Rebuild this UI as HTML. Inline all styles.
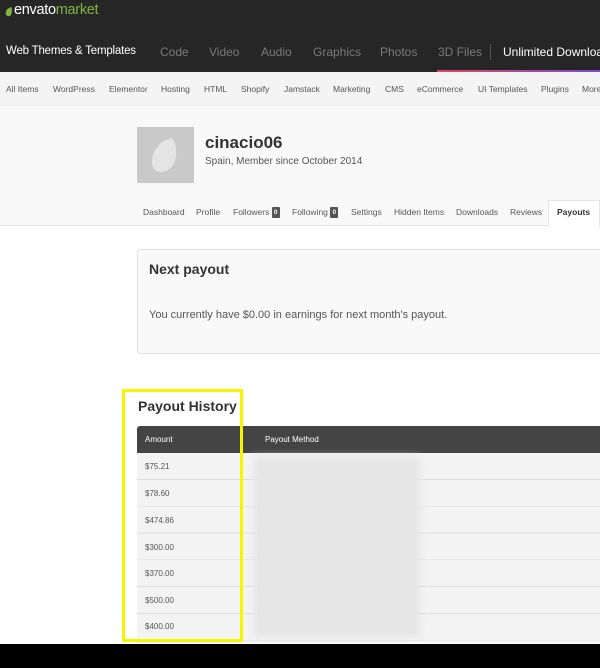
<!DOCTYPE html>
<html><head><meta charset="utf-8"><style>
*{margin:0;padding:0;box-sizing:border-box}
body{width:600px;height:668px;overflow:hidden;background:#fff;font-family:"Liberation Sans",Arial,sans-serif;position:relative}
.a{position:absolute;white-space:nowrap}
.bd{display:inline-block;background:#555;color:#fff;font-size:6.5px;width:8px;height:11px;line-height:11px;text-align:center;border-radius:1px;vertical-align:middle;font-weight:bold}
</style></head><body>
<div class="a" style="left:0;top:0;width:600px;height:72px;background:#262626"></div>
<svg class="a" style="left:5px;top:7px" width="8" height="10" viewBox="0 0 9 11"><path d="M7 0C3 1 0 4 1 8c1 3 5 3 6 0C8 5 8 2 7 0z" fill="#82b541"/></svg>
<div class="a" style="left:14px;top:2px;font-size:14.5px;color:#fff;letter-spacing:-0.3px">envato<span style="color:#82b541">market</span></div>
<div class="a" style="left:6px;top:45px;font-size:11.5px;letter-spacing:-0.2px;color:#fff">Web Themes &amp; Templates</div>
<div class="a" style="left:160px;top:45px;font-size:12px;color:#7a7a7a">Code</div>
<div class="a" style="left:209px;top:45px;font-size:12px;color:#7a7a7a">Video</div>
<div class="a" style="left:261px;top:45px;font-size:12px;color:#7a7a7a">Audio</div>
<div class="a" style="left:313px;top:45px;font-size:12px;color:#7a7a7a">Graphics</div>
<div class="a" style="left:380px;top:45px;font-size:12px;color:#7a7a7a">Photos</div>
<div class="a" style="left:438px;top:45px;font-size:12px;color:#7a7a7a">3D Files</div>
<div class="a" style="left:490px;top:44px;width:1px;height:16px;background:#555"></div>
<div class="a" style="left:503px;top:45px;font-size:12px;color:#fff">Unlimited Downloads</div>
<div class="a" style="left:437px;top:70px;width:163px;height:2px;background:linear-gradient(90deg,#e0455e,#7b4cd6)"></div>
<div class="a" style="left:0;top:72px;width:600px;height:34px;background:#f4f4f4;border-bottom:1px solid #e8e8e8"></div>
<div class="a" style="left:59px;top:67px;width:0;height:0;border:5px solid transparent;border-bottom-color:#f4f4f4"></div>
<div class="a" style="top:84px;left:0;font-size:8.5px;color:#555">
<span class="a" style="left:6px">All Items</span><span class="a" style="left:53px">WordPress</span><span class="a" style="left:109px">Elementor</span><span class="a" style="left:161px">Hosting</span><span class="a" style="left:204px">HTML</span><span class="a" style="left:241px">Shopify</span><span class="a" style="left:284px">Jamstack</span><span class="a" style="left:333px">Marketing</span><span class="a" style="left:385px">CMS</span><span class="a" style="left:417px">eCommerce</span><span class="a" style="left:478px">UI Templates</span><span class="a" style="left:541px">Plugins</span><span class="a" style="left:582px">More</span></div>
<div class="a" style="left:0;top:107px;width:600px;height:119px;background:#f9f9f9;border-bottom:1px solid #e4e4e4"></div>
<div class="a" style="left:137px;top:127px;width:57px;height:56px;background:#c9c9c9"></div>
<svg class="a" style="left:148px;top:136px" width="34" height="40" viewBox="0 0 34 40"><path d="M24 2C13 4 4 14 4 26c0 8 6 11 11 10 10-2 14-12 13-22 0-5-2-9-4-12z" fill="#e4e4e4"/></svg>
<div class="a" style="left:205px;top:133px;font-size:17px;font-weight:bold;color:#333">cinacio06</div>
<div class="a" style="left:205px;top:156px;font-size:10px;color:#555">Spain, Member since October 2014</div>
<div class="a" style="left:548px;top:200px;width:52px;height:27px;background:#fff;border:1px solid #e4e4e4;border-bottom:none"></div>
<div class="a" style="top:207px;left:0;font-size:8.5px;color:#555">
<span class="a" style="left:143px">Dashboard</span><span class="a" style="left:196px">Profile</span><span class="a" style="left:233px">Followers <span class="bd">0</span></span><span class="a" style="left:292px">Following <span class="bd">0</span></span><span class="a" style="left:351px">Settings</span><span class="a" style="left:394px">Hidden Items</span><span class="a" style="left:456px">Downloads</span><span class="a" style="left:510px">Reviews</span><span class="a" style="left:557px;color:#333;font-weight:bold">Payouts</span></div>
<div class="a" style="left:137px;top:249px;width:470px;height:105px;background:#f9f9f9;border:1px solid #e2e2e2;border-radius:3px"></div>
<div class="a" style="left:149px;top:261px;font-size:14px;font-weight:bold;color:#333">Next payout</div>
<div class="a" style="left:149px;top:309px;font-size:11px;color:#555">You currently have $0.00 in earnings for next month's payout.</div>
<div class="a" style="left:138px;top:398px;font-size:14px;font-weight:bold;color:#333">Payout History</div>
<div class="a" style="left:137px;top:426px;width:463px;height:27px;background:#444;border-radius:3px 0 0 0"></div>
<div class="a" style="left:145px;top:435px;font-size:8px;color:#fff">Amount</div>
<div class="a" style="left:265px;top:435px;font-size:8px;color:#fff">Payout Method</div>
<div class="a" style="left:137px;top:453px;width:463px;height:190px;background:repeating-linear-gradient(#f3f3f3 0,#f3f3f3 26px,#dcdcdc 26px,#dcdcdc 26.8px)"></div>
<div class="a" style="left:258px;top:461px;width:158px;height:172px;background:#e6e6e6;box-shadow:0 0 8px 4px #e6e6e6"></div>
<div style="font-size:8px;color:#555">
<div class="a" style="left:145px;top:462px">$75.21</div>
<div class="a" style="left:145px;top:489px">$78.60</div>
<div class="a" style="left:145px;top:516px">$474.86</div>
<div class="a" style="left:145px;top:543px">$300.00</div>
<div class="a" style="left:145px;top:569px">$370.00</div>
<div class="a" style="left:145px;top:596px">$500.00</div>
<div class="a" style="left:145px;top:622px">$400.00</div>
</div>
<div class="a" style="left:122px;top:389px;width:121px;height:253px;border:3px solid #f5f500"></div>
<div class="a" style="left:0;top:644px;width:600px;height:24px;background:#000"></div>
</body></html>
